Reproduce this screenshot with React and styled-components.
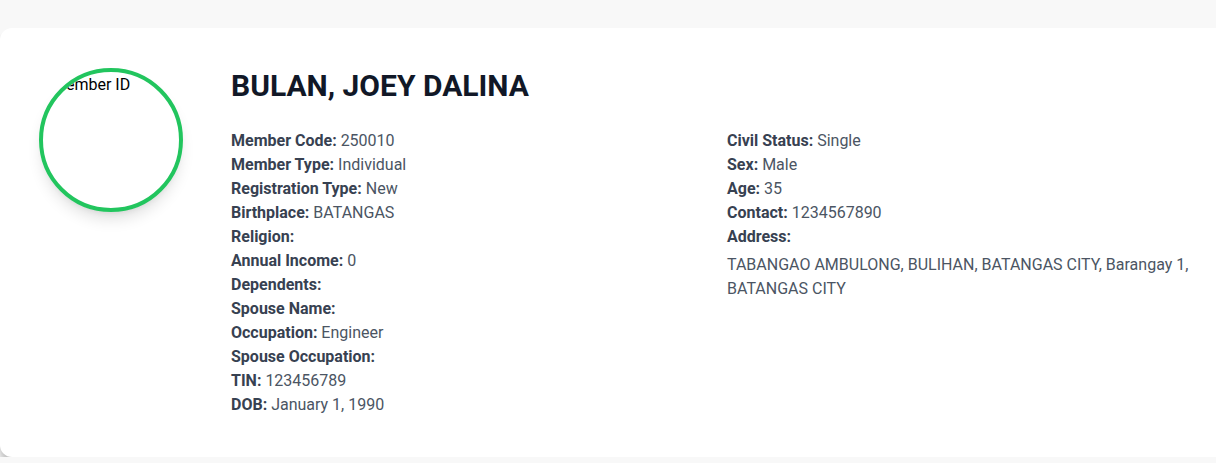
import React from "react";
import styled, { createGlobalStyle } from "styled-components";

const GlobalStyle = createGlobalStyle`
  body {
    margin: 0;
    background: #f8f8f8;
    font-family: Roboto, "Liberation Sans", sans-serif;
    overflow: hidden;
  }
`;

const Page = styled.div`
  padding-top: 28px;
  width: 1247px;
`;

const Card = styled.div`
  display: flex;
  align-items: flex-start;
  gap: 48px;
  padding: 40px 40px 40px 39px;
  background: #ffffff;
  border-radius: 12px;
  box-shadow: 0 10px 8px rgba(0, 0, 0, 0.16), 0 4px 4px rgba(0, 0, 0, 0.08);
`;

const Avatar = styled.div`
  flex-shrink: 0;
  width: 136px;
  height: 136px;
  border: 4px solid #22c55e;
  border-radius: 50%;
  overflow: hidden;
  box-shadow: 0 10px 15px -3px rgba(0, 0, 0, 0.12), 0 4px 6px -4px rgba(0, 0, 0, 0.1);
`;

const AltText = styled.span`
  display: block;
  padding: 3px 0 0 9px;
  font-size: 16px;
  line-height: 20px;
  color: #000000;
`;

const Info = styled.div`
  flex: 1;
`;

const Name = styled.h1`
  margin: 0 0 25px;
  font-size: 30px;
  line-height: 36px;
  font-weight: 700;
  color: #111827;
`;

const Columns = styled.div`
  display: grid;
  grid-template-columns: 1fr 1fr;
  column-gap: 16px;
`;

const Column = styled.div``;

const Row = styled.div`
  font-size: 16px;
  line-height: 24px;
  color: #4b5563;
`;

const Label = styled.strong`
  font-weight: 700;
  color: #374151;
`;

const Address = styled.p`
  margin: 4px 0 0;
  font-size: 16px;
  line-height: 24px;
  color: #4b5563;
`;

const left = [
  ["Member Code", "250010"],
  ["Member Type", "Individual"],
  ["Registration Type", "New"],
  ["Birthplace", "BATANGAS"],
  ["Religion", ""],
  ["Annual Income", "0"],
  ["Dependents", ""],
  ["Spouse Name", ""],
  ["Occupation", "Engineer"],
  ["Spouse Occupation", ""],
  ["TIN", "123456789"],
  ["DOB", "January 1, 1990"],
];

const right = [
  ["Civil Status", "Single"],
  ["Sex", "Male"],
  ["Age", "35"],
  ["Contact", "1234567890"],
  ["Address", ""],
];

const Field = ({ label, value }) => (
  <Row>
    <Label>{label}:</Label> {value}
  </Row>
);

const App = () => {
  return (
    <Page>
      <GlobalStyle />
      <Card>
        <Avatar>
          <AltText>Member ID</AltText>
        </Avatar>
        <Info>
          <Name>BULAN, JOEY DALINA</Name>
          <Columns>
            <Column>
              {left.map(([l, v]) => (
                <Field key={l} label={l} value={v} />
              ))}
            </Column>
            <Column>
              {right.map(([l, v]) => (
                <Field key={l} label={l} value={v} />
              ))}
              <Address>
                TABANGAO AMBULONG, BULIHAN, BATANGAS CITY, Barangay 1, BATANGAS CITY
              </Address>
            </Column>
          </Columns>
        </Info>
      </Card>
    </Page>
  );
};

export default App;
